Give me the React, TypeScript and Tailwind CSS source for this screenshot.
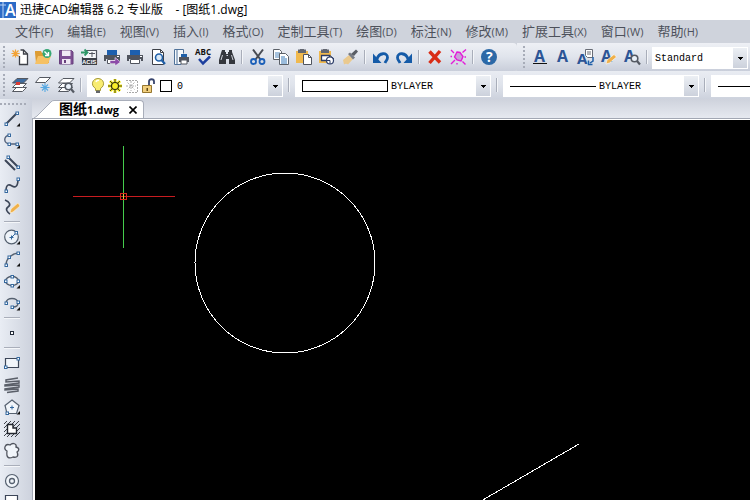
import type { ReactNode } from "react";

const UI = "font-['Open_Sans','Noto_Sans_CJK_SC',sans-serif]";

const INK = "#3d4048";
const BLUE = "#1f5fa8";

const menus: [string, string][] = [
  ["文件", "F"],
  ["编辑", "E"],
  ["视图", "V"],
  ["插入", "I"],
  ["格式", "O"],
  ["定制工具", "T"],
  ["绘图", "D"],
  ["标注", "N"],
  ["修改", "M"],
  ["扩展工具", "X"],
  ["窗口", "W"],
  ["帮助", "H"],
];

function Icon({ children }: { children: ReactNode }) {
  return (
    <svg viewBox="0 0 18 18" className="size-[18px] shrink-0 overflow-visible" fill="none" aria-hidden="true">
      {children}
    </svg>
  );
}

function Tool({ label, children }: { label: string; children: ReactNode }) {
  return (
    <button type="button" aria-label={label} className="flex h-7 w-[23px] shrink-0 items-center justify-center">
      <Icon>{children}</Icon>
    </button>
  );
}

function Separator() {
  return (
    <div className="flex w-2 shrink-0 justify-center">
      <div className="h-3.5 w-0.5 border-l border-[#a9aeba] bg-[#f4f6f9]" />
    </div>
  );
}

function Grip() {
  return (
    <div className="flex w-2 shrink-0 items-center justify-center self-stretch py-[3px]">
      <div className="h-full w-0.5 bg-[repeating-linear-gradient(to_bottom,#a7acb8_0px,#a7acb8_2px,transparent_2px,transparent_4px)]" />
    </div>
  );
}

function Combo({
  label,
  options,
  className,
  children,
}: {
  label: string;
  options: string[];
  className: string;
  children?: ReactNode;
}) {
  return (
    <div className={`relative mt-0.5 flex h-[22px] shrink-0 items-center bg-white ${className}`}>
      {children}
      <select
        aria-label={label}
        className="h-full min-w-0 flex-1 appearance-none bg-transparent pl-[3px] font-['Liberation_Mono',monospace] text-[10px] text-black outline-none"
      >
        {options.map((o) => (
          <option key={o}>{o}</option>
        ))}
      </select>
      <span className="pointer-events-none absolute inset-y-px right-px flex w-3.5 items-center justify-center bg-linear-to-b from-[#eceff4] to-[#ccd1dc]">
        <svg viewBox="0 0 5 3" className="h-[3px] w-[5px]" shapeRendering="crispEdges" aria-hidden="true">
          <path d="M0 0h5v1h-1v1h-1v1h-1v-1h-1v-1h-1z" fill="#000" />
        </svg>
      </span>
    </div>
  );
}

function Printer({ blue = "#1d5fae" }: { blue?: string }) {
  return (
    <>
      <path d="M4 2h10v5H4z" fill={blue} />
      <path d="M1 7h16v6h-2v-2H3v2H1z" fill="#50545e" />
      <path d="M4.500 11.500h9v4h-9z" fill="#fff" stroke="#50545e" />
      <path d="M14 8h2v1h-2z" fill="#fff" />
    </>
  );
}

function LetterA({ x = 2, size = 16 }: { x?: number; size?: number }) {
  return (
    <text x={x} y="14" fontSize={size} fontWeight="700" fontFamily="Open Sans, sans-serif" fill="#2c5596">
      A
    </text>
  );
}

function Lens({ color = "#555a63" }: { color?: string }) {
  return (
    <>
      <circle cx="11.500" cy="10.500" r="3.300" stroke={color} strokeWidth="1.600" fill="#e9f0f8" />
      <path d="M14 13l3 3.500" stroke={color} strokeWidth="2.200" />
    </>
  );
}

function Clipboard() {
  return (
    <>
      <path d="M1 3h12v12H1z" fill="#f0b94e" />
      <path d="M3 1.500h8V5H3z" fill="#626670" />
      <path d="M5 1h4v1.500H5z" fill="#626670" />
    </>
  );
}

function StandardTools() {
  return (
    <>
      <Tool label="新建">
        <path d="M8.500 8v8.500h8V6l-4-4H9.500" fill="#fff" stroke={INK} strokeWidth="1.300" />
        <path d="M12.500 2v4h4" stroke={INK} strokeWidth="1.300" />
        <path d="M4.500 1.500v8M0.500 5.500h8M1.500 2.500l6 6M7.500 2.500l-6 6" stroke="#f2a235" strokeWidth="1.200" />
      </Tool>
      <Tool label="打开">
        <path d="M1 5V3h6l1 2h7v10H2z" fill="#dd9c33" />
        <path d="M4 8h13l-3 8H1z" fill="#f6c164" />
        <circle cx="13" cy="5.500" r="4.500" fill="#35a774" />
        <path d="M10.500 3.500l4 4M14.500 4v3.500H11" stroke="#fff" strokeWidth="1.400" />
      </Tool>
      <Tool label="保存">
        <path d="M2.500 2.500h12l1.500 1.500v12H2.500z" fill="#7d4e93" stroke="#68407d" />
        <path d="M5 2.500h8.500V8H5z" fill="#f1eaf5" />
        <path d="M5 11h8.500v5H5z" fill="#eee6f2" />
        <path d="M7 12h2v3H7z" fill="#68407d" />
      </Tool>
      <Tool label="ACIS">
        <path d="M6 2.500h10.500v13h-14V9" fill="#f5f7fa" stroke="#50545e" strokeWidth="1.200" />
        <path d="M9 5.500h6M12 4v5" stroke="#50545e" />
        <path d="M1 4.500h6M4.500 1.500l3 3-3 3" stroke="#2f9869" strokeWidth="1.800" />
        <path d="M2 10h15v7H2z" fill="#3c4048" />
        <text x="2" y="16" fontSize="6" fontWeight="700" fontFamily="Liberation Sans, sans-serif" fill="#fff">
          ACIS
        </text>
      </Tool>
      <Tool label="发布">
        <Printer />
        <path d="M7 12.500h5V9.500l5.500 4.500-5.500 4v-2.500H7z" fill="#8c4ba8" stroke="#f4eef7" strokeWidth=".6" />
      </Tool>
      <Tool label="打印">
        <Printer />
      </Tool>
      <Tool label="打印预览">
        <path d="M3.500 1.500h8l3 3v12h-11z" fill="#fff" stroke={INK} />
        <path d="M11.500 1.500v3h3" stroke={INK} />
        <circle cx="10" cy="9.500" r="3.500" fill="#d8e8f7" stroke={BLUE} strokeWidth="1.600" />
        <path d="M12.500 12l3.500 4" stroke={BLUE} strokeWidth="2.200" />
      </Tool>
      <Tool label="页面设置">
        <path d="M9 16.500H2.500v-15h9v4" fill="#f6f9fc" stroke="#50729a" />
        <path d="M5 2v14" stroke="#50729a" />
        <path d="M9 6h6v3H9z" fill={BLUE} />
        <path d="M7 9h10v5H7z" fill="#50545e" />
        <path d="M9 12h6v4H9z" fill="#fff" stroke="#50545e" />
      </Tool>
      <Tool label="拼写检查">
        <text x="0" y="7" fontSize="8" fontWeight="700" fontFamily="Open Sans, sans-serif" fill="#111">
          ABC
        </text>
        <path d="M4 11l4 4.500L15 8.500" stroke="#1d3f9e" strokeWidth="2.500" />
      </Tool>
      <Tool label="查找">
        <path d="M4 2h3v2h1v2h2V4h1V2h3v2l3 8v4h-6v-5H8v5H1v-4l2-7z" fill="#34373d" />
        <path d="M4.500 7L3 12M13.500 7l1.500 5M8.500 7.500h1.500" stroke="#c9cdd6" />
      </Tool>
      <Separator />
      <Tool label="剪切">
        <path d="M4 1.500l7.500 10M14 1.500L6.500 11.500" stroke="#474b53" strokeWidth="2" />
        <circle cx="4.500" cy="13.500" r="2.500" stroke="#1b5fb8" strokeWidth="1.800" />
        <circle cx="13" cy="13.500" r="2.500" stroke="#1b5fb8" strokeWidth="1.800" />
      </Tool>
      <Tool label="复制">
        <path d="M1.500 1.500h6l2 2v8h-8z" fill="#fff" stroke="#5b6068" />
        <path d="M3 5h5M3 7h5M3 9h5" stroke="#4f86bd" />
        <path d="M7.500 5.500h6l3 3v8h-9z" fill="#fff" stroke="#5b6068" />
        <path d="M9 9h4M9 11h6M9 13h6M9 15h6" stroke="#3778b8" />
      </Tool>
      <Tool label="粘贴">
        <Clipboard />
        <path d="M8.500 6.500h5l3 3v7h-8z" fill="#fff" stroke="#50545e" />
        <path d="M13.500 6.500v3h3" stroke="#50545e" />
      </Tool>
      <Tool label="粘贴为块">
        <Clipboard />
        <path d="M3.500 7.500h8v5h-8z" fill="#fff" stroke="#2d3d68" strokeWidth="1.300" />
        <circle cx="12" cy="12.500" r="3.500" fill="#fff" stroke="#2d3d68" strokeWidth="1.200" />
        <path d="M9 12.500h3V16M12 7.500l4 3.500" stroke="#2d3d68" />
      </Tool>
      <Tool label="特性匹配">
        <path d="M2 12l6-5 4 4-5 5.500c-1-1-3-1-4 0z" fill="#eac98e" />
        <path d="M7 6l2-1.500 5 5L12 11.500z" fill="#777b83" />
        <path d="M10 6l5-4.500 2 2L13 8z" fill="#595d65" />
      </Tool>
      <Separator />
      <Tool label="放弃">
        <path d="M5 11C7 4.500 15.500 4 15.500 9.500c0 2.500-1.500 3-2.500 5.500" stroke="#155ba8" strokeWidth="2.800" />
        <path d="M1 5.500v9.500h8.500z" fill="#155ba8" />
      </Tool>
      <Tool label="重做">
        <path d="M13 11C11 4.500 2.500 4 2.500 9.500c0 2.500 1.500 3 2.500 5.500" stroke="#155ba8" strokeWidth="2.800" />
        <path d="M17 5.500v9.500H8.500z" fill="#155ba8" />
      </Tool>
      <Separator />
      <Tool label="删除">
        <path d="M3.500 3.500l10.500 11M14 3L3.500 15" stroke="#d92c16" strokeWidth="3.400" />
      </Tool>
      <Tool label="清理">
        <path d="M8 4l3 .5 3 4-2 4.500-4-1-2.500-3z" fill="#c9a0d8" stroke="#e31bd8" strokeWidth="1.400" />
        <path
          d="M2 2l3 3M17 1.500l-3.500 3M2 16l4-4M16.500 16.500l-3-3M1.500 8.500h1.500M15.500 9h1.500M8 16.500v-1.500"
          stroke="#e31bd8"
          strokeWidth="1.400"
        />
      </Tool>
      <Separator />
      <Tool label="帮助">
        <circle cx="9" cy="9" r="8" fill="#2c69a7" />
        <text x="6" y="14" fontSize="14" fontWeight="700" fontFamily="Open Sans, sans-serif" fill="#fff">
          ?
        </text>
      </Tool>
    </>
  );
}

function TextTools() {
  return (
    <>
      <Tool label="多行文字">
        <LetterA x={3} />
        <path d="M2 15.500h14" stroke="#111" />
      </Tool>
      <Tool label="单行文字">
        <LetterA x={3} />
      </Tool>
      <Tool label="文字样式">
        <text x="0" y="16" fontSize="15" fontWeight="700" fontFamily="Open Sans, sans-serif" fill="#2c5596">
          A
        </text>
        <path d="M8.500 1.500h7v8h-5l-2-2z" fill="#fff" stroke="#686c75" />
        <path d="M10 4h4M10 6h4" stroke="#686c75" />
        <path d="M16 9v4l-3 2M11.500 12.500v4h4" stroke={BLUE} strokeWidth="1.500" />
      </Tool>
      <Tool label="编辑文字">
        <LetterA x={1} />
        <path d="M6 16l1-4 7-5.500 2.500 2.500-7 6z" fill="#efb04b" stroke="#fff" strokeWidth=".6" />
      </Tool>
      <Tool label="查找文字">
        <LetterA x={1} />
        <Lens />
      </Tool>
    </>
  );
}

function Sheets({ top = "#fff" }: { top?: string }) {
  return (
    <>
      <path d="M5.500 11.500h10l-4 4h-10z" fill="#fff" stroke="#555961" />
      <path d="M5.500 7.500h10l-4 4h-10z" fill="#fff" stroke="#555961" />
      <path d="M6 2.500h11l-4.500 4.500h-11z" fill={top} stroke="#555961" />
    </>
  );
}

function LayerTools() {
  return (
    <>
      <Tool label="图层特性">
        <Sheets top="#3f6da0" />
        <path d="M5 6h4v3H5z" fill="#d83c35" />
      </Tool>
      <Tool label="冻结图层">
        <path d="M5.500 1.500h11l-5 5h-10z" fill="#fff" stroke="#555961" />
        <path d="M11 7v9M6.500 11.500h9M8 8.500l6 6M14 8.500l-6 6" stroke="#58a9e2" strokeWidth="1.100" />
      </Tool>
      <Tool label="图层查找">
        <Sheets />
        <Lens />
      </Tool>
    </>
  );
}

function LayerState() {
  return (
    <div className="flex items-center pl-0.5">
      <span className="flex w-[17px] justify-center">
        <Icon>
          <path d="M6.500 11.500C1 8 3.500 1.500 9 1.500s8 6.500 2.500 10v2h-5z" fill="#f8ec72" stroke="#a79b38" />
          <path d="M7 5c.5-1.500 2-2 3-1.500" stroke="#fff" strokeWidth="1.400" />
          <path d="M7 13.500h4v2.500H7z" fill="#63666b" />
        </Icon>
      </span>
      <span className="flex w-[17px] justify-center">
        <Icon>
          <path
            d="M9 2v14M2 9h14M4 4l10 10M14 4L4 14"
            stroke="#f4e91c"
            strokeWidth="3"
          />
          <path d="M9 2v3M9 13v3M2 9h3M13 9h3M4 4l2 2M12 12l2 2M14 4l-2 2M6 12l-2 2" stroke="#4d4a12" />
          <circle cx="9" cy="9" r="3.500" fill="#f9ef28" stroke="#302e12" strokeWidth="1.200" />
        </Icon>
      </span>
      <span className="flex w-[17px] justify-center">
        <Icon>
          <path
            d="M8 4v10M3 9h10M4.500 5.500l7 7M11.500 5.500l-7 7"
            stroke="#b0b0b0"
            strokeDasharray="2 1"
          />
          <path d="M3 3.500h11.500v12H4" stroke="#a9a9a9" strokeDasharray="2 1" />
        </Icon>
      </span>
      <span className="flex w-[17px] justify-center">
        <Icon>
          <path d="M9 8V4.500c0-3 5-3 5 0V7" stroke="#37446e" strokeWidth="1.800" />
          <path d="M2.500 8.500h9v7h-9z" fill="#f1cf7e" stroke="#95762f" />
          <path d="M6.500 11h1.500v3H6.500z" fill="#614916" />
        </Icon>
      </span>
      <span className="flex w-[17px] justify-center">
        <span className="size-3 border border-black bg-white" />
      </span>
    </div>
  );
}

const NODE = "#35699f";

function Node({ x, y }: { x: number; y: number }) {
  return <rect x={x - 1} y={y - 1} width="2.500" height="2.500" fill="#fff" stroke={NODE} />;
}

function DrawTool({ label, more, children }: { label: string; more?: boolean; children: ReactNode }) {
  return (
    <button type="button" aria-label={label} className="flex h-[22px] w-6 shrink-0 items-center justify-center">
      <Icon>
        {children}
        {more && <path d="M17 13v3.500h-3.500z" fill="#111" />}
      </Icon>
    </button>
  );
}

function DrawSeparator() {
  return (
    <div className="flex h-2 w-6 shrink-0 items-center px-1">
      <div className="h-0.5 w-full border-t border-[#a9aeba] bg-[#f4f6f9]" />
    </div>
  );
}

function DrawBar() {
  const line = "#3c4658";
  return (
    <aside aria-label="绘图" className="flex w-8 shrink-0 flex-col overflow-hidden bg-linear-to-r from-[#e9edf4] to-[#cdd2dd]">
      <div className="flex h-[9px] w-7 shrink-0 items-center">
        <div className="h-0.5 w-full bg-[repeating-linear-gradient(to_right,#a7acb8_0px,#a7acb8_2px,transparent_2px,transparent_4px)]" />
      </div>
      <DrawTool label="直线" more>
        <path d="M3 14L14 3" stroke={line} strokeWidth="2" />
        <Node x={3} y={14} />
        <Node x={14} y={3} />
      </DrawTool>
      <DrawTool label="多段线" more>
        <path d="M7 3C0 3 0 12 7 12h8" stroke="#53617a" strokeWidth="1.400" />
        <Node x={6} y={3} />
        <Node x={6} y={12} />
        <Node x={14} y={12} />
      </DrawTool>
      <DrawTool label="双线">
        <path d="M5 3l10 10M2 6l10 10" stroke={line} strokeWidth="2" />
        <Node x={5} y={3} />
        <Node x={15} y={13} />
      </DrawTool>
      <DrawTool label="样条曲线">
        <path d="M3 15c0-7 3-7 6-5s6 1 6-7" stroke={line} strokeWidth="1.600" />
        <Node x={3} y={15} />
        <Node x={15} y={3} />
      </DrawTool>
      <DrawTool label="徒手画">
        <path d="M2 2c5 2 6 5 3 7s-1 5 2 7" stroke={line} strokeWidth="1.600" />
        <path d="M7 15l1-4 7-6 2 3-7 6z" fill="#efb04b" stroke="#fff2d4" strokeWidth=".6" />
      </DrawTool>
      <DrawSeparator />
      <DrawTool label="圆" more>
        <circle cx="8.500" cy="9" r="6.800" fill="#eef3f9" stroke="#55606f" strokeWidth="1.200" />
        <path d="M6.500 9.500h4M8.500 7.500v4M9 9l4-4" stroke={NODE} />
        <Node x={13} y={4.5} />
      </DrawTool>
      <DrawTool label="圆弧" more>
        <path d="M3 15c0-6 5-11 12-12" stroke="#55606f" strokeWidth="1.400" />
        <Node x={3} y={15} />
        <Node x={6} y={7} />
        <Node x={15} y={3} />
      </DrawTool>
      <DrawTool label="椭圆" more>
        <ellipse cx="9" cy="9" rx="6.500" ry="4.500" fill="#eef3f9" stroke="#55606f" strokeWidth="1.400" />
        <Node x={2.5} y={9} />
        <Node x={15} y={9} />
        <Node x={9} y={4.5} />
        <Node x={9} y={13.5} />
      </DrawTool>
      <DrawTool label="椭圆弧" more>
        <path d="M3 9c0-6 12-6 12 0 0 3-2 4-5 4" stroke="#55606f" strokeWidth="1.400" />
        <Node x={3} y={9} />
        <Node x={15} y={8} />
        <Node x={9} y={13} />
      </DrawTool>
      <DrawSeparator />
      <DrawTool label="点">
        <rect x="7.500" y="7.500" width="3" height="3" fill="#fff" stroke="#222a38" />
      </DrawTool>
      <DrawSeparator />
      <DrawTool label="矩形">
        <path d="M2.500 4.500h13v9h-13z" fill="#f1f5fa" stroke={line} strokeWidth="1.200" />
        <Node x={2.5} y={13} />
        <Node x={15} y={4.5} />
      </DrawTool>
      <DrawTool label="螺旋">
        <path
          d="M15 2L3 4v2l13-1v2L2 9v1l14-1v2L2 13v1l13-1v2L4 16.500"
          stroke="#5a5f69"
          strokeWidth="1.500"
        />
      </DrawTool>
      <DrawTool label="多边形" more>
        <path d="M9 2l7 5.500-2.500 8H4L2 7.500z" fill="#f1f5fa" stroke="#55606f" strokeWidth="1.200" />
        <path d="M7 9.500h4M9 7.500v4" stroke={NODE} />
        <Node x={4} y={15} />
      </DrawTool>
      <DrawTool label="图案填充">
        <path
          d="M1 4l3-3M1 8l7-7M1 12l11-11M1 16L16 1M4 17L17 4M8 17l9-9M12 17l5-5"
          stroke="#3c4048"
        />
        <path d="M4.500 4.500h5.500v3.500h3.500V13.500h-9z" fill="#fff" stroke="#23272f" strokeWidth="1.400" />
      </DrawTool>
      <DrawTool label="修订云线">
        <path
          d="M4 9C0 7 2 1 7 3c3-3 7-1 6 2 4 1 3 4 1 5 2 4 0 6-4 5-4 2-7 1-6-6z"
          fill="#f1f5fa"
          stroke="#50545e"
          strokeWidth="1.300"
        />
      </DrawTool>
      <DrawSeparator />
      <DrawTool label="圆环">
        <circle cx="9" cy="9" r="6.500" fill="#f1f5fa" stroke="#55606f" strokeWidth="1.200" />
        <circle cx="9" cy="9" r="2.500" stroke="#55606f" strokeWidth="1.300" />
      </DrawTool>
      <DrawTool label="区域覆盖">
        <path d="M2.500 1.500h12v13h-12z" fill="#fff" stroke={line} strokeWidth="1.200" />
      </DrawTool>
    </aside>
  );
}

function Drawing() {
  return (
    <svg className="block size-full" fill="none" shapeRendering="crispEdges" role="img" aria-label="图纸1">
      <circle cx="250" cy="143" r="90" stroke="#fff" />
      <path d="M544 324L434 388" stroke="#fff" />
      <path d="M38 76.500h102" stroke="#c81c20" />
      <path d="M88 26h1v102h-1z" fill="#45cc4c" />
      <rect x="85.500" y="73.500" width="6" height="6" stroke="#d8261c" />
      <path d="M88 74h1v5h-1z" fill="#d8d03a" />
    </svg>
  );
}

export default function App() {
  return (
    <div className={`flex h-screen w-full flex-col overflow-hidden bg-[#cfd3dc] ${UI}`}>
      <header className="flex h-5 shrink-0 items-center bg-white text-xs text-black">
        <svg viewBox="0 0 16 16" className="mr-1 size-4 shrink-0 overflow-visible" aria-hidden="true">
          <path d="M0 0h16v16H0z" fill="#2c6bc6" />
          <path d="M0 3h6M3 0v16" stroke="#b9d5f7" />
          <text x="5" y="14" fontSize="16" fontWeight="600" fontFamily="Open Sans, sans-serif" fill="#fff">
            A
          </text>
        </svg>
        <h1 className="whitespace-pre">迅捷CAD编辑器 6.2 专业版{"    "}- [图纸1.dwg]</h1>
      </header>

      <nav className="flex h-[23px] shrink-0 items-center gap-3.5 pl-[15px] text-[13px] whitespace-nowrap text-[#4d515b]">
        {menus.map(([name, key]) => (
          <button type="button" key={key} className="shrink-0">
            {name}
            <span className="text-[11px]">({key})</span>
          </button>
        ))}
      </nav>

      <div className="flex h-7 shrink-0">
        <div className="flex w-[517px] shrink-0 items-center rounded-r-sm bg-linear-to-b from-[#eef0f5] via-[#e0e4ec] to-[#c9ceda]">
          <Grip />
          <StandardTools />
        </div>
        <div className="flex min-w-0 flex-1 items-center bg-linear-to-b from-[#eef0f5] via-[#e0e4ec] to-[#c9ceda] pl-[3px]">
          <Grip />
          <TextTools />
          <Separator />
          <Combo label="文字样式" options={["Standard"]} className="mx-px w-24" />
        </div>
      </div>

      <div className="flex h-7 shrink-0 items-center overflow-hidden bg-linear-to-b from-[#e9ecf2] via-[#dfe3eb] to-[#cdd2dd]">
        <Grip />
        <LayerTools />
        <Separator />
        <Combo label="图层" options={["0"]} className="mx-0.5 w-[196px]">
          <LayerState />
        </Combo>
        <Separator />
        <Combo label="颜色" options={["BYLAYER"]} className="mx-0.5 w-[196px]">
          <span className="ml-[7px] h-3 w-[86px] shrink-0 border border-black" />
        </Combo>
        <Separator />
        <Combo label="线型" options={["BYLAYER"]} className="mx-0.5 w-[196px]">
          <span className="ml-[7px] h-px w-[86px] shrink-0 bg-black" />
        </Combo>
        <Separator />
        <Combo label="线宽" options={["BYLAYER"]} className="mx-0.5 w-[196px]">
          <span className="ml-[7px] h-px w-[86px] shrink-0 bg-black" />
        </Combo>
      </div>

      <div className="flex min-h-0 flex-1 bg-linear-to-b from-[#d3d7e0] to-[#e6e9f0]">
        <DrawBar />
        <main className="flex min-w-0 flex-1 flex-col">
          <div className="flex h-[19px] shrink-0 items-end bg-linear-to-b from-[#ced2dc] to-[#e6e9f0] pl-0.5">
            <svg viewBox="0 0 20 18" className="h-[18px] w-5 shrink-0" aria-hidden="true">
              <path d="M0 18L3 16L17 2Q18 0.500 20 0.500V18z" fill="#fff" />
              <path d="M0 18L3 16L17 2Q18 0.500 20 0.500" fill="none" stroke="#a9aeba" />
            </svg>
            <div className="flex h-[18px] items-center gap-2 rounded-tr-sm border-t border-r border-[#a9aeba] bg-white pr-1 pl-[5px] text-black">
              <button type="button" className="text-sm leading-4 font-bold whitespace-nowrap">
                图纸<span className="text-[11px]">1.dwg</span>
              </button>
              <button type="button" aria-label="关闭" className="flex size-3 items-center justify-center">
                <svg viewBox="0 0 8 8" className="size-2" aria-hidden="true">
                  <path d="M0.500 0.500l7 7M7.500 0.500l-7 7" stroke="#000" strokeWidth="1.600" />
                </svg>
              </button>
            </div>
          </div>
          <div className="min-h-0 flex-1 border-t border-l border-[#a2a7b3]">
            <div className="h-full border-t border-l-2 border-white bg-black">
              <Drawing />
            </div>
          </div>
        </main>
      </div>
    </div>
  );
}
